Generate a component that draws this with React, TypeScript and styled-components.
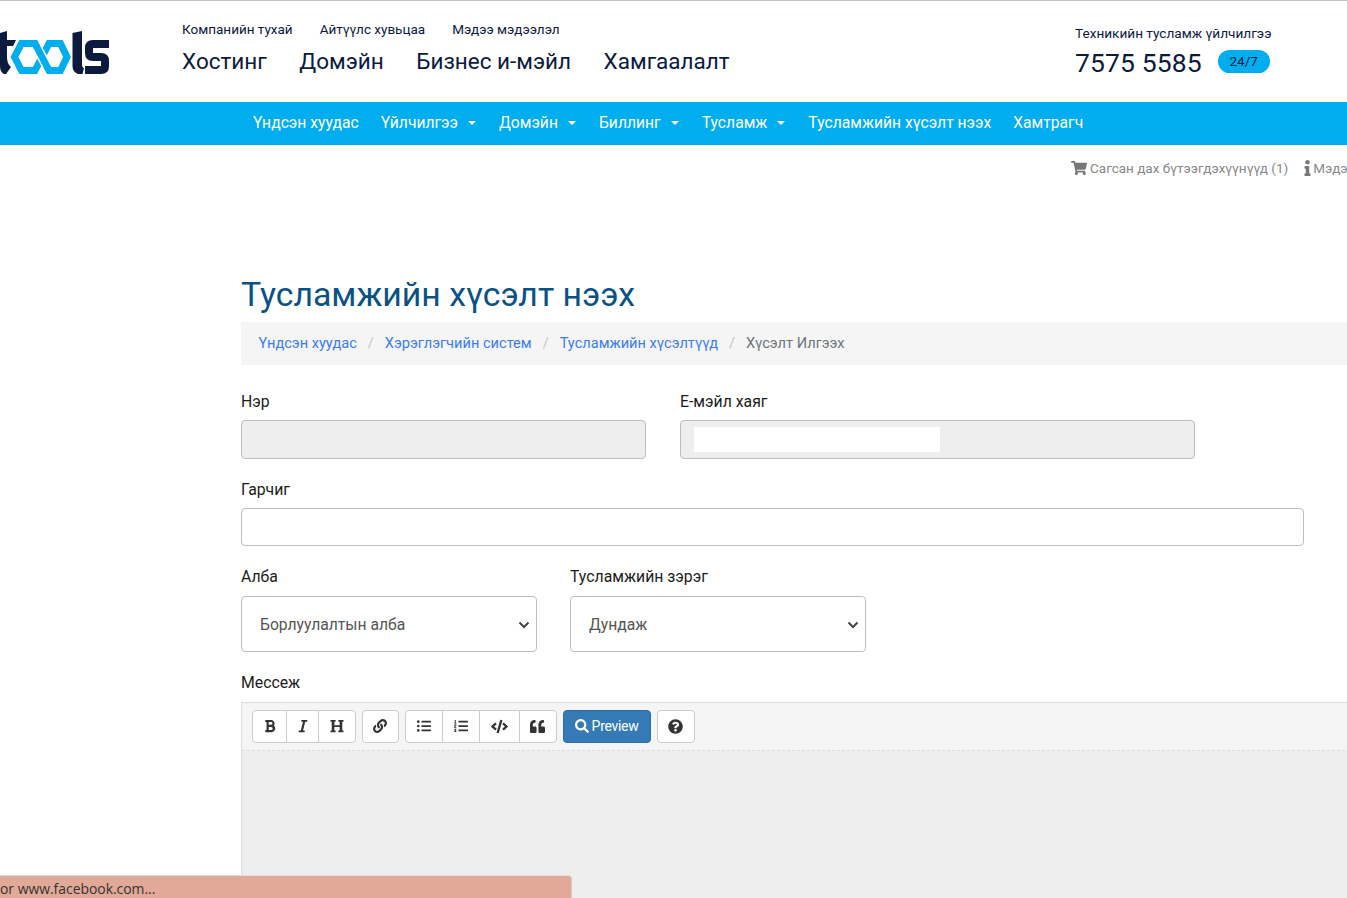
import React from "react";
import styled, { createGlobalStyle } from "styled-components";
import {
  FaShoppingCart, FaInfo, FaBold, FaItalic, FaHeading, FaLink, FaListUl, FaListOl,
  FaCode, FaQuoteLeft, FaSearch, FaQuestionCircle,
} from "react-icons/fa";

const Global = createGlobalStyle`
  html, body { margin: 0; padding: 0; background: #fff; overflow: hidden; }
  * { box-sizing: border-box; }
  body { font-family: Roboto, "Liberation Sans", sans-serif; color: #333; }
`;

const Page = styled.div`
  position: relative;
  width: 1347px;
  height: 898px;
  overflow: hidden;
`;

const Header = styled.header`
  height: 102px;
  border-top: 1px solid #cdbfb9;
  display: flex;
  color: #0b1a3e;
`;

const LogoBox = styled.a`
  width: 182px;
  flex: none;
  padding-top: 29px;
  svg { display: block; }
`;

const HeaderLinks = styled.div`
  width: 893px;
  flex: none;
  padding-top: 18px;
`;

const TopLinks = styled.div`
  display: flex;
  gap: 27px;
  font-size: 13.5px;
  line-height: 20px;
`;

const MainLinks = styled.div`
  display: flex;
  gap: 32.5px;
  margin-top: 6px;
  font-size: 22.5px;
  font-weight: 400;
  line-height: 32px;
`;

const Support = styled.div`
  padding-top: 22px;
  font-size: 13.6px;
  line-height: 20px;
`;

const PhoneRow = styled.div`
  display: flex;
  align-items: center;
  gap: 16px;
  margin-top: 3px;
`;

const Phone = styled.span`
  font-size: 26.5px;
  line-height: 34px;
  letter-spacing: 0.1px;
`;

const Pill = styled.span`
  width: 52px;
  height: 23px;
  margin-top: -3px;
  border-radius: 12px;
  background: #00adee;
  font-size: 13.5px;
  line-height: 23px;
  text-align: center;
`;

const Nav = styled.nav`
  height: 43px;
  padding: 0 0 2px 253px;
  background: #00adee;
  display: flex;
  align-items: center;
  gap: 22px;
  color: #fff;
  font-size: 15.7px;
`;

const NavItem = styled.a`
  display: flex;
  align-items: center;
  white-space: nowrap;
`;

const Caret = styled.i`
  display: inline-block;
  margin: 0 1px 0 10px;
  border-top: 4px solid #fff;
  border-left: 4px solid transparent;
  border-right: 4px solid transparent;
`;

const SubBar = styled.div`
  display: flex;
  align-items: flex-start;
  gap: 16px;
  padding: 13px 0 0 1071px;
  height: 47px;
  color: #888;
  font-size: 13.5px;
  line-height: 20px;
  white-space: nowrap;
`;

const SubLink = styled.a`
  display: flex;
  align-items: center;
  gap: 3px;
  svg { color: #777; font-size: 16px; }
`;

const InfoIcon = styled(FaInfo)`
  width: 7px;
  margin-right: -1px;
`;

const Content = styled.main`
  margin-left: 241px;
  width: 1200px;
`;

const Title = styled.h1`
  margin: 60px 0 0;
  padding-top: 16px;
  font-size: 33.8px;
  line-height: 54px;
  height: 70px;
  font-weight: 400;
  color: #0a5285;
`;

const Breadcrumb = styled.ol`
  list-style: none;
  margin: 0;
  height: 43px;
  padding: 0 0 2px 17.5px;
  display: flex;
  align-items: center;
  background: #f5f5f5;
  font-size: 14.6px;
  li + li::before {
    content: "/";
    color: #c4c7ca;
    padding: 0 11px;
  }
`;

const Crumb = styled.li<{ $active?: boolean }>`
  color: ${(p) => (p.$active ? "#6c757d" : "#3b7df5")};
`;

const Row = styled.div<{ $top?: number; $gap?: number }>`
  display: flex;
  gap: ${(p) => p.$gap ?? 34}px;
  margin-top: ${(p) => p.$top ?? 18}px;
`;

const Field = styled.div<{ $w: number }>`
  position: relative;
  width: ${(p) => p.$w}px;
`;

const Label = styled.label<{ $gap?: number }>`
  display: block;
  padding-top: 1px;
  font-size: 15.8px;
  line-height: 24px;
  font-weight: 400;
  color: #1c1c1c;
  margin-bottom: ${(p) => p.$gap ?? 6}px;
`;

const Input = styled.input<{ $h: number }>`
  display: block;
  width: 100%;
  height: ${(p) => p.$h}px;
  border: 1px solid #bdbdbd;
  border-radius: 4px;
  background: #fff;
  &:disabled { background: #eee; }
`;

const Redaction = styled.span`
  position: absolute;
  left: 14px;
  top: 38px;
  width: 246px;
  height: 25px;
  background: #fff;
`;

const SelectWrap = styled.div`
  position: relative;
  svg {
    position: absolute;
    right: 7px;
    top: 25px;
    pointer-events: none;
  }
`;

const Select = styled.select`
  display: block;
  width: 100%;
  height: 56px;
  padding: 0 18px;
  border: 1px solid #bdbdbd;
  border-radius: 4px;
  background: #fff;
  color: #555;
  font-family: inherit;
  font-size: 15.7px;
  appearance: none;
`;

const Editor = styled.div`
  width: 1200px;
  height: 210px;
  border: 1px solid #ddd;
  border-bottom: 0;
  background: #eee;
`;

const Toolbar = styled.div`
  display: flex;
  gap: 6px;
  height: 48px;
  padding: 7px 10px 0;
  background: #f5f5f5;
  border-bottom: 1px dashed #ddd;
`;

const Group = styled.div`
  display: flex;
  height: 33px;
`;

const ToolButton = styled.button<{ $w: number }>`
  width: ${(p) => p.$w}px;
  height: 33px;
  padding: 0 0 1px;
  display: flex;
  align-items: center;
  justify-content: center;
  background: #fff;
  color: #333;
  border: 1px solid #ccc;
  margin-left: -1px;
  font-size: 14px;
  &:first-child { margin-left: 0; border-radius: 4px 0 0 4px; }
  &:last-child { border-radius: 0 4px 4px 0; }
  &:only-child { border-radius: 4px; }
`;

const PreviewButton = styled.button`
  width: 88px;
  height: 33px;
  padding: 0 0 1px;
  display: flex;
  align-items: center;
  justify-content: center;
  gap: 3px;
  background: #337ab7;
  color: #fff;
  border: 1px solid #2e6da4;
  border-radius: 4px;
  font-family: inherit;
  font-size: 14px;
  letter-spacing: -0.3px;
`;

const StatusBar = styled.div`
  position: absolute;
  left: 0;
  bottom: 0;
  width: 572px;
  height: 23px;
  background: #e2a998;
  border-top: 1px solid #dedede;
  border-right: 1px solid #ccc;
  border-radius: 0 4px 0 0;
  color: #333;
  font-family: "Open Sans", "Noto Sans", sans-serif;
  font-size: 13.9px;
  line-height: 25px;
  white-space: nowrap;
`;

const Logo = () => (
  <svg width="112" height="48" viewBox="0 0 112 48">
    <path
      d="M21.5 13.5 H35 L49 40.5 H60.5 L67 27 L60.5 13.5 H49 L35 40.5 H21.5 L14.5 27 Z"
      fill="none"
      stroke="#00aeef"
      strokeWidth="7"
    />
    <path d="M37 17.5 L47 36.5" fill="none" stroke="#fff" strokeWidth="10" />
    <path d="M36 15.5 L48 38.5" fill="none" stroke="#00aeef" strokeWidth="7" />
    <g fill="#0c1b3d">
      <path d="M0 3 L7 1 V10 H16 L13 16 H7 V27 Q7 34 11 37 L6 44 H4 Q0 42 0 36 Z" />
      <path d="M72.5 3 L82 1 V34 Q82 38 84 38 L82.5 44 H78 Q72.5 42 72.5 36 Z" />
    </g>
    <path
      d="M109 14 H93 Q89 14 89 18 V23 Q89 27 93 27 H101 Q105 27 105 31 V36 Q105 40 101 40 H85"
      fill="none"
      stroke="#0c1b3d"
      strokeWidth="8"
    />
  </svg>
);

const Chevron = () => (
  <svg width="12" height="8" viewBox="0 0 12 8">
    <path d="M1.5 1.5 L6 6 L10.5 1.5" fill="none" stroke="#444" strokeWidth="2" />
  </svg>
);

export default function App() {
  return (
    <Page>
      <Global />
      <Header>
        <LogoBox aria-label="tools"><Logo /></LogoBox>
        <HeaderLinks>
          <TopLinks>
            <a>Компанийн тухай</a>
            <a>Айтүүлс хувьцаа</a>
            <a>Мэдээ мэдээлэл</a>
          </TopLinks>
          <MainLinks>
            <a>Хостинг</a>
            <a>Домэйн</a>
            <a>Бизнес и-мэйл</a>
            <a>Хамгаалалт</a>
          </MainLinks>
        </HeaderLinks>
        <Support>
          Техникийн тусламж үйлчилгээ
          <PhoneRow>
            <Phone>7575 5585</Phone>
            <Pill>24/7</Pill>
          </PhoneRow>
        </Support>
      </Header>
      <Nav>
        <NavItem>Үндсэн хуудас</NavItem>
        <NavItem>Үйлчилгээ<Caret /></NavItem>
        <NavItem>Домэйн<Caret /></NavItem>
        <NavItem>Биллинг<Caret /></NavItem>
        <NavItem>Тусламж<Caret /></NavItem>
        <NavItem>Тусламжийн хүсэлт нээх</NavItem>
        <NavItem>Хамтрагч</NavItem>
      </Nav>
      <SubBar>
        <SubLink><FaShoppingCart />Сагсан дах бүтээгдэхүүнүүд (1)</SubLink>
        <SubLink><InfoIcon />Мэдээлэл</SubLink>
      </SubBar>
      <Content>
        <Title>Тусламжийн хүсэлт нээх</Title>
        <Breadcrumb>
          <Crumb>Үндсэн хуудас</Crumb>
          <Crumb>Хэрэглэгчийн систем</Crumb>
          <Crumb>Тусламжийн хүсэлтүүд</Crumb>
          <Crumb $active>Хүсэлт Илгээх</Crumb>
        </Breadcrumb>
        <Row $top={24}>
          <Field $w={405}>
            <Label>Нэр</Label>
            <Input $h={39} disabled />
          </Field>
          <Field $w={515}>
            <Label>Е-мэйл хаяг</Label>
            <Input $h={39} disabled />
            <Redaction />
          </Field>
        </Row>
        <Row>
          <Field $w={1063}>
            <Label>Гарчиг</Label>
            <Input $h={38} />
          </Field>
        </Row>
        <Row $gap={33}>
          <Field $w={296}>
            <Label $gap={7}>Алба</Label>
            <SelectWrap>
              <Select defaultValue="sales"><option value="sales">Борлуулалтын алба</option></Select>
              <Chevron />
            </SelectWrap>
          </Field>
          <Field $w={296}>
            <Label $gap={7}>Тусламжийн зэрэг</Label>
            <SelectWrap>
              <Select defaultValue="mid"><option value="mid">Дундаж</option></Select>
              <Chevron />
            </SelectWrap>
          </Field>
        </Row>
        <Row>
          <Field $w={1200}>
            <Label $gap={7}>Мессеж</Label>
            <Editor>
              <Toolbar>
                <Group>
                  <ToolButton $w={35}><FaBold /></ToolButton>
                  <ToolButton $w={33}><FaItalic /></ToolButton>
                  <ToolButton $w={37.5}><FaHeading /></ToolButton>
                </Group>
                <Group>
                  <ToolButton $w={37.5}><FaLink /></ToolButton>
                </Group>
                <Group>
                  <ToolButton $w={38}><FaListUl /></ToolButton>
                  <ToolButton $w={38}><FaListOl /></ToolButton>
                  <ToolButton $w={40.5}><FaCode size={17} /></ToolButton>
                  <ToolButton $w={38}><FaQuoteLeft size={15} /></ToolButton>
                </Group>
                <PreviewButton><FaSearch />Preview</PreviewButton>
                <Group>
                  <ToolButton $w={38}><FaQuestionCircle size={15} /></ToolButton>
                </Group>
              </Toolbar>
            </Editor>
          </Field>
        </Row>
      </Content>
      <StatusBar>or www.facebook.com...</StatusBar>
    </Page>
  );
}
